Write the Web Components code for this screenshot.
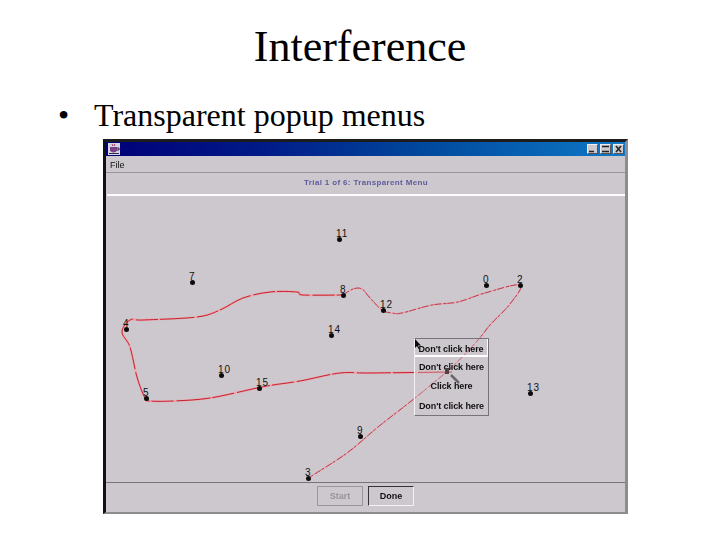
<!DOCTYPE html>
<html>
<head>
<meta charset="utf-8">
<title>Interference</title>
<style>
  html, body { margin: 0; padding: 0; background: #fff; }
</style>
</head>
<body>
<slide-page heading="Interference">
  <span slot="bullet">Transparent popup menus</span>
  <java-window caption="Trial 1 of 6: Transparent Menu">
    <trial-canvas>
      <trial-target x="233" y="43" label="11"></trial-target>
      <trial-target x="86" y="86" label="7"></trial-target>
      <trial-target x="237" y="99" label="8"></trial-target>
      <trial-target x="380" y="89" label="0"></trial-target>
      <trial-target x="414" y="89" label="2"></trial-target>
      <trial-target x="277" y="114" label="12"></trial-target>
      <trial-target x="20" y="133" label="4"></trial-target>
      <trial-target x="225" y="139" label="14"></trial-target>
      <trial-target x="115" y="179" label="10"></trial-target>
      <trial-target x="153" y="192" label="15"></trial-target>
      <trial-target x="40" y="202" label="5"></trial-target>
      <trial-target x="424" y="197" label="13"></trial-target>
      <trial-target x="254" y="240" label="9"></trial-target>
      <trial-target x="202" y="282" label="3"></trial-target>
      <popup-menu>
        <menu-row active>Don't click here</menu-row>
        <menu-row>Don't click here</menu-row>
        <menu-row>Click here</menu-row>
        <menu-row>Don't click here</menu-row>
      </popup-menu>
    </trial-canvas>
    <java-button slot="buttons" disabled>Start</java-button>
    <java-button slot="buttons" focused>Done</java-button>
  </java-window>
</slide-page>

<script>
const UI_FONT = '"Liberation Sans", Arial, sans-serif';

class SlidePage extends HTMLElement {
  constructor() {
    super();
    this.attachShadow({ mode: 'open' });
  }
  connectedCallback() {
    this.shadowRoot.innerHTML = `
      <style>
        :host {
          display: flex;
          flex-direction: column;
          width: 720px;
          height: 540px;
          overflow: hidden;
          background: #fff;
          color: #000;
          font-family: "Liberation Serif", "Times New Roman", serif;
        }
        h1 {
          margin: 0;
          padding-top: 22px;
          height: 50px;
          font-size: 44px;
          line-height: 50px;
          font-weight: normal;
          text-align: center;
        }
        .bullet {
          display: flex;
          height: 36px;
          padding: 25px 0 0 58px;
          font-size: 32px;
          line-height: 36px;
        }
        .dot { width: 36px; }
        .body { padding: 6px 0 0 103px; }
      </style>
      <h1>${this.getAttribute('heading')}</h1>
      <div class="bullet"><span class="dot">•</span><slot name="bullet"></slot></div>
      <div class="body"><slot></slot></div>
    `;
  }
}

class JavaWindow extends HTMLElement {
  constructor() {
    super();
    this.attachShadow({ mode: 'open' });
  }
  connectedCallback() {
    this.shadowRoot.innerHTML = `
      <style>
        :host {
          display: flex;
          flex-direction: column;
          box-sizing: border-box;
          width: 525px;
          height: 375px;
          background: #cdc8cd;
          border-style: solid;
          border-color: #1c1c1c #8f8c90 #8f8c90 #111;
          border-width: 3px 3px 2px 3px;
          font-family: ${UI_FONT};
          color: #111;
        }
        .title {
          display: flex;
          align-items: center;
          height: 14px;
          flex: none;
          padding: 0 1px 0 2px;
          background: linear-gradient(90deg, #000078 0%, #001a88 30%, #00479c 60%, #0a6cbc 90%, #1478c4 100%);
        }
        .title svg.logo { width: 12px; height: 12px; }
        .controls { display: flex; margin-left: auto; }
        .controls span {
          display: flex;
          box-sizing: border-box;
          width: 11px;
          height: 10px;
          margin-left: 2px;
          background: #cdc8cd;
          border: 1px solid;
          border-color: #eee #555 #555 #eee;
        }
        .controls svg { width: 9px; height: 8px; }
        .menu {
          flex: none;
          height: 17px;
          box-sizing: border-box;
          padding-left: 4px;
          font-size: 9px;
          line-height: 18px;
          border-bottom: 1px solid #99959a;
          filter: blur(.25px);
        }
        .caption {
          flex: none;
          height: 21px;
          font-size: 8px;
          font-weight: bold;
          letter-spacing: .35px;
          line-height: 20px;
          text-align: center;
          color: #5c5c9c;
          filter: blur(.25px);
          border-bottom: 2px solid #fff;
          margin-left: 1px;
        }
        .main { flex: 1; min-height: 0; display: flex; }
        .buttons {
          flex: none;
          display: flex;
          justify-content: center;
          gap: 5px;
          height: 30px;
          box-sizing: border-box;
          padding-top: 3px;
          border-top: 1px solid #77747a;
        }
      </style>
      <div class="title">
        <svg class="logo" viewBox="0 0 12 12">
          <rect width="12" height="12" fill="#d8d4e0"/>
          <path d="M2 4h7v3.500q-1 2-3.500 2t-3.500-2z" fill="#7a3f8c"/>
          <path d="M9 5h2v2H9M1 10.500h10" stroke="#33224a" fill="none"/>
          <path d="M4 1l1 2M7 1L6 3" stroke="#a03060"/>
        </svg>
        <div class="controls">
          <span><svg viewBox="0 0 9 8"><path d="M1 6.500h5" stroke="#222" stroke-width="1.500"/></svg></span>
          <span><svg viewBox="0 0 9 8"><path d="M1 1.500h7M1 6.500h7" stroke="#222" stroke-width="1.500"/></svg></span>
          <span><svg viewBox="0 0 9 8"><path d="M2 1l5 6M7 1L2 7" stroke="#222" stroke-width="1.500"/></svg></span>
        </div>
      </div>
      <div class="menu">File</div>
      <div class="caption">${this.getAttribute('caption')}</div>
      <div class="main"><slot></slot></div>
      <div class="buttons"><slot name="buttons"></slot></div>
    `;
  }
}

// Smooth line through the given points (Catmull-Rom to bezier)
function smoothPath(pts) {
  let d = `M${pts[0][0]} ${pts[0][1]}`;
  for (let i = 0; i < pts.length - 1; i++) {
    const p0 = pts[i - 1] || pts[i];
    const p1 = pts[i];
    const p2 = pts[i + 1];
    const p3 = pts[i + 2] || p2;
    const c1x = p1[0] + (p2[0] - p0[0]) / 6;
    const c1y = p1[1] + (p2[1] - p0[1]) / 6;
    const c2x = p2[0] - (p3[0] - p1[0]) / 6;
    const c2y = p2[1] - (p3[1] - p1[1]) / 6;
    d += `C${c1x.toFixed(1)} ${c1y.toFixed(1)} ${c2x.toFixed(1)} ${c2y.toFixed(1)} ${p2[0]} ${p2[1]}`;
  }
  return d;
}

// page coordinates, canvas origin is 106,196
const ORIGIN = [106, 196];
const toCanvas = pts => pts.map(p => [p[0] - ORIGIN[0], p[1] - ORIGIN[1]]);

const THICK_TRAIL = toCanvas([
  [452,372],[370,373],[340,373],[300,381],[273,385],[257,388],[210,398],[173,401],[150,401],
  [145,398],[137,377],[130,347],[122,332],[130,320],[143,320],[197,317],[220,310],[243,298],
  [270,292],[297,292],[303,295],[343,295]
]);
const THIN_TRAIL = toCanvas([
  [343,295],[353,289],[362,289],[370,298],[382,310],[392,313],[402,313],[432,305],[458,302],
  [485,293],[520,285],[510,304],[490,325],[478,340],[452,367],[415,398],[378,427],
  [347,453],[310,477]
]);

class TrialCanvas extends HTMLElement {
  constructor() {
    super();
    this.attachShadow({ mode: 'open' });
  }
  connectedCallback() {
    this.shadowRoot.innerHTML = `
      <style>
        :host {
          display: block;
          position: relative;
          flex: 1;
          overflow: hidden;
        }
        svg { position: absolute; left: 0; top: 0; }
      </style>
      <svg width="519" height="288" fill="none">
        <path d="${smoothPath(THICK_TRAIL)}" stroke="#eba0aa" stroke-width="2.200" opacity=".8"/>
        <path d="${smoothPath(THICK_TRAIL)}" stroke="#c8202c" stroke-width="1" stroke-dasharray="34 3 22 2"/>
        <path d="${smoothPath(THIN_TRAIL)}" stroke="#e9a8b2" stroke-width="1.600" opacity=".8"/>
        <path d="${smoothPath(THIN_TRAIL)}" stroke="#b01c30" stroke-width=".8" stroke-dasharray="7 2 3 1"/>
      </svg>
      <slot></slot>
    `;
  }
}

class TrialTarget extends HTMLElement {
  constructor() {
    super();
    this.attachShadow({ mode: 'open' });
  }
  connectedCallback() {
    const x = this.getAttribute('x');
    const y = this.getAttribute('y');
    this.shadowRoot.innerHTML = `
      <style>
        :host {
          position: absolute;
          left: ${x}px;
          top: ${y}px;
          width: 0;
          height: 0;
        }
        i {
          position: absolute;
          left: -2px;
          top: -2px;
          width: 5px;
          height: 5px;
          border-radius: 50%;
          background: #0c0c0c;
        }
        b {
          position: absolute;
          left: -3px;
          bottom: 0;
          font-size: 10px;
          line-height: 10px;
          font-weight: normal;
          letter-spacing: 1px;
          white-space: nowrap;
          color: #111;
        }
      </style>
      <b>${this.getAttribute('label')}</b><i></i>
    `;
  }
}

class PopupMenu extends HTMLElement {
  constructor() {
    super();
    this.attachShadow({ mode: 'open' });
  }
  connectedCallback() {
    this.shadowRoot.innerHTML = `
      <style>
        :host {
          position: absolute;
          left: 308px;
          top: 142px;
          width: 75px;
          height: 78px;
          box-sizing: border-box;
          display: flex;
          flex-direction: column;
          border-style: solid;
          border-width: 1px;
          border-color: #77737a #77737a #77737a #f4f2f4;
          background: rgba(205, 200, 205, .35);
        }
        svg { position: absolute; left: -1px; top: -1px; }
      </style>
      <slot></slot>
      <svg width="75" height="78">
        <path d="M1 1v9l2-2 1.500 3 1-.5L4 7.500h3z" fill="#0a0a0a"/>
        <rect x="31" y="30" width="4" height="6" fill="#4a4448"/>
        <path d="M37 37l8 8" stroke="#69666b" stroke-width="2.500"/>
      </svg>
    `;
  }
}

class MenuRow extends HTMLElement {
  constructor() {
    super();
    this.attachShadow({ mode: 'open' });
  }
  connectedCallback() {
    this.shadowRoot.innerHTML = `
      <style>
        :host {
          display: block;
          flex: 1;
          box-sizing: border-box;
          padding-top: 4px;
          font-family: ${UI_FONT};
          font-size: 9px;
          line-height: 12px;
          font-weight: bold;
          letter-spacing: -.1px;
          text-align: center;
          color: #111;
          filter: blur(.25px);
        }
        :host([active]) {
          border-bottom: 2px solid #fff;
          border-right: 1px solid #fff;
          flex: none;
          height: 18px;
        }
      </style>
      <slot></slot>
    `;
  }
}

class JavaButton extends HTMLElement {
  constructor() {
    super();
    this.attachShadow({ mode: 'open' });
  }
  connectedCallback() {
    this.shadowRoot.innerHTML = `
      <style>
        :host {
          display: flex;
          align-items: center;
          justify-content: center;
          box-sizing: border-box;
          width: 46px;
          height: 20px;
          font-family: ${UI_FONT};
          font-size: 9px;
          font-weight: bold;
          filter: blur(.25px);
          border: 1px solid;
          color: #111;
          border-color: #333 #f4f2f4 #f4f2f4 #333;
        }
        :host([disabled]) {
          color: #96939a;
          border-color: #9a979c;
        }
      </style>
      <slot></slot>
    `;
  }
}

customElements.define('slide-page', SlidePage);
customElements.define('java-window', JavaWindow);
customElements.define('trial-canvas', TrialCanvas);
customElements.define('trial-target', TrialTarget);
customElements.define('popup-menu', PopupMenu);
customElements.define('menu-row', MenuRow);
customElements.define('java-button', JavaButton);
</script>
</body>
</html>
